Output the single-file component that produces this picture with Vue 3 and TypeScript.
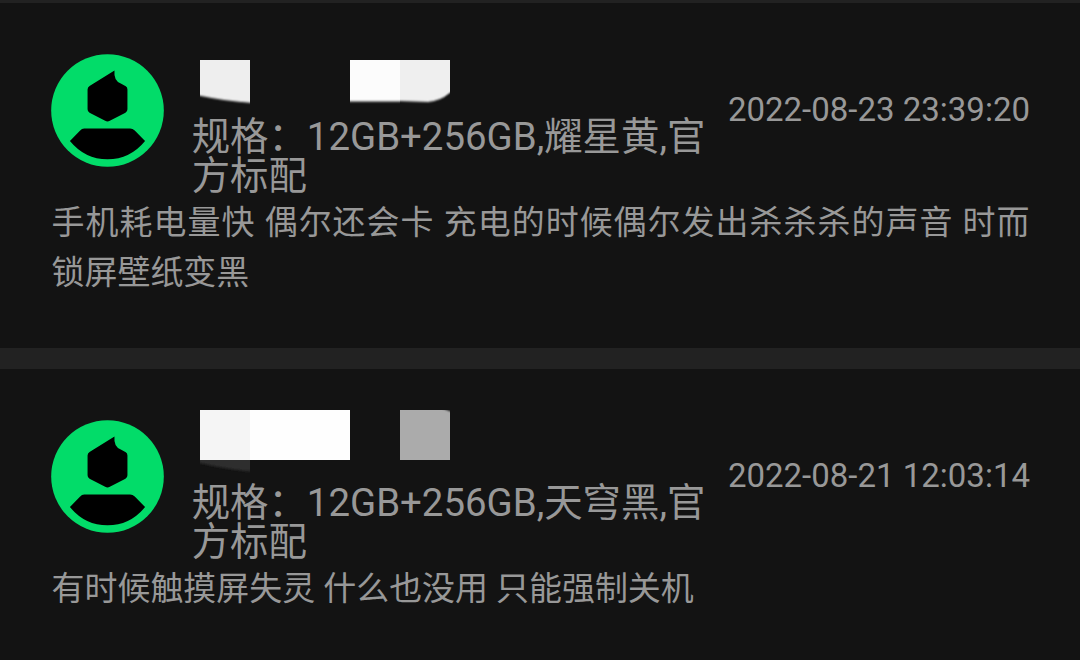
<script setup lang="ts">
interface MaskTile {
  d: string;
  fill: string;
  soft?: boolean;
}

interface Review {
  id: number;
  spec: string;
  time: string;
  content: string;
  tiles: MaskTile[];
}

const reviews: Review[] = [
  {
    id: 1,
    spec: '规格：12GB+256GB,耀星黄,官方标配',
    time: '2022-08-23 23:39:20',
    content: '手机耗电量快 偶尔还会卡 充电的时候偶尔发出杀杀杀的声音 时而锁屏壁纸变黑',
    tiles: [
      { d: 'M-8 14H66V63.5Q25 62 -8 54Z', fill: '#eeeeee', soft: true },
      { d: 'M150 14H200V61.500H142V14Z', fill: '#fcfcfc', soft: true },
      { d: 'M200 14H260V42Q246 61 228 62L200 61Z', fill: '#efefef', soft: true },
    ],
  },
  {
    id: 2,
    spec: '规格：12GB+256GB,天穹黑,官方标配',
    time: '2022-08-21 12:03:14',
    content: '有时候触摸屏失灵 什么也没用 只能强制关机',
    tiles: [
      { d: 'M-8 40H60V66Q25 64 -8 55Z', fill: '#2d2d2d', soft: true },
      { d: 'M0 4H50V54H0Z', fill: '#f5f5f5' },
      { d: 'M50 4H150V54H50Z', fill: '#fefefe' },
      { d: 'M200 -4H225Q242 2 260 9V60H200Z', fill: '#ababab', soft: true },
    ],
  },
];
</script>

<template>
  <main class="review-list">
    <article v-for="review in reviews" :key="review.id" class="review">
      <header class="review-header">
        <svg class="avatar" viewBox="32 40 340 340">
          <circle cx="202" cy="210" r="169.500" fill="#02dc69" />
          <path
            d="M223 90Q220 121 242 129L257 137Q262 140 262 147V206Q262 213 256 217L209 241Q202 245 195 241L148 217Q142 213 142 206V147Q142 140 148 136Z"
          />
          <path
            d="M132 264H270Q278 264 284 270L315 302Q270 357 202 357Q134 357 89 302L119 271Q125 264 132 264Z"
          />
        </svg>

        <div class="meta">
          <svg class="name-mask" viewBox="0 0 250 76">
            <defs>
              <filter :id="`soft-${review.id}`">
                <feGaussianBlur stdDeviation="0 1.3" />
              </filter>
              <clipPath :id="`cells-${review.id}`">
                <path
                  v-if="review.id === 1"
                  d="M0 20H50V76H0ZM150 20H250V76H150Z"
                />
                <path v-else d="M0 4H50V76H0ZM50 4H250V54H50Z" />
              </clipPath>
            </defs>
            <g :clip-path="`url(#cells-${review.id})`">
              <path
                v-for="(tile, index) in review.tiles"
                :key="index"
                :d="tile.d"
                :fill="tile.fill"
                :filter="tile.soft ? `url(#soft-${review.id})` : undefined"
              />
            </g>
          </svg>
          <div class="spec">{{ review.spec }}</div>
        </div>

        <time class="time">{{ review.time }}</time>
      </header>
      <p class="content">{{ review.content }}</p>
    </article>
  </main>
</template>

<style>
body {
  margin: 0;
  background: #131313;
}
</style>

<style scoped>
.review-list {
  box-sizing: border-box;
  width: 1080px;
  height: 660px;
  overflow: hidden;
  padding-top: 3px;
  background: #222222;
  color: #989898;
  font-family: Roboto, 'Noto Sans CJK SC', sans-serif;
  display: flex;
  flex-direction: column;
  gap: 21px;
}

.review {
  box-sizing: border-box;
  flex: none;
  height: 345px;
  padding: 37px 50px 0 51px;
  background: #131313;
}

.review-header {
  display: flex;
  height: 158px;
}

.avatar {
  flex: none;
  width: 113px;
  height: 113px;
  margin-top: 13.6px;
}

.meta {
  flex: none;
  width: 520px;
  margin-left: 27.7px;
}

.name-mask {
  display: block;
  width: 250px;
  height: 76px;
  margin-left: 8.3px;
}

.spec {
  padding-top: 2px;
  font-size: 38.4px;
  line-height: 38.5px;
}

.time {
  flex: none;
  margin-left: auto;
  margin-top: 50px;
  font-size: 33px;
  line-height: 39px;
  white-space: nowrap;
}

.content {
  margin: 0 0.5px 0 0.6px;
  font-size: 32.95px;
  line-height: 49.5px;
  text-align: justify;
}
</style>
